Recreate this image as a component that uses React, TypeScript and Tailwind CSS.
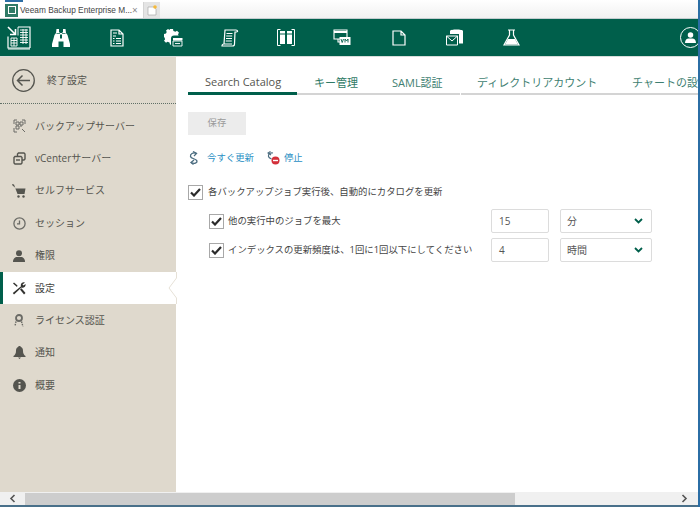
import React from "react";

const W = "#ffffff";
const GREEN = "#005f4b";

function Logo() {
  return (
    <svg width="24" height="24" viewBox="0 0 24 24" fill="none" stroke={W} strokeWidth="1.100">
      <path d="M1 1l7.500 7.500M8.500 3v5.500H3" strokeWidth="1.600" />
      <path d="M11 1h12v21M1 10.500V22h22" strokeWidth="1.200" />
      <path d="M1 23h22" strokeWidth="1" />
      <path d="M11 1v8.500M13 4h8M13 6.500h8M13 9h8M13 11.500h8M13 14h8M13 16.500h8M16 3v15M19 3v15" strokeWidth=".9" />
      <path d="M4 12h6v8H4zM4 14.500h6M4 17h6M7 12v8" strokeWidth=".9" />
    </svg>
  );
}

const icons: React.ReactNode[] = [
  <svg key="b" width="18" height="19" viewBox="0 0 18 19" fill={W}>
    <path d="M4.500 1H7v3l1 1h2l1-1V1h2.500L14 5l1.500 2 2.500 9v3h-6.500v-5.500h-5V19H0v-3l2.500-9L4 5z" />
    <path d="M4.500 5.500H8M10 5.500h3.500" stroke={GREEN} strokeWidth=".7" />
    <path d="M8 6.500h2v4H8z" fill={GREEN} />
  </svg>,
  <svg key="d" width="14" height="18" viewBox="0 0 14 18" fill="none" stroke={W} strokeWidth="1.200">
    <path d="M1 1h8l4 4v12H1zM9 1v4h4" />
    <path d="M3 4h4M3 7h3M3 9.500h1.500M6 9.500h5M3 12h1.500M6 12h5M3 14.500h1.500M6 14.500h5" />
  </svg>,
  <svg key="g" width="19" height="18" viewBox="0 0 19 18" fill={W}>
    <path d="M6 0h3l.4 2 2 .8L13 1.700l2 2-1 1.500.6 1.300H10a3 3 0 0 0-3 3v6.300l-1-.3-.5-2-2-.8L2 13.800l-2-2 1.100-1.600-.6-1.700L0 8V5l2-.4.7-1.600L2 1.500 4 0l1.600 1z" />
    <path d="M9 9h9.500v2.500H9z" />
    <path d="M9 12h9v5H9zM11 14.500h5" fill="none" stroke={W} strokeWidth=".9" />
  </svg>,
  <svg key="s" width="18" height="18" viewBox="0 0 18 18" fill="none" stroke={W} strokeWidth="1.200">
    <path d="M4 1h11c2 0 2 2 .5 2H14l-.5 12c0 1.500-1 2-2 2H1c0-1.500 1-2 2-2zM3 15h8" />
    <path d="M5.500 4.500h6M5.200 7h6M5 9.500h6M4.800 12h6" />
  </svg>,
  <svg key="l" width="18" height="17" viewBox="0 0 18 17" fill={W}>
    <path d="M.5.500v16M17.500.500v16M.5.500h3M.5 16.500h3M17.500.500h-3M17.500 16.500h-3" fill="none" stroke={W} strokeWidth="1" />
    <path d="M3 2h5v13H3zM10 2h5v13h-5z" />
    <path d="M3 5h5M10 5h5" stroke={GREEN} strokeWidth="1" />
  </svg>,
  <svg key="v" width="18" height="17" viewBox="0 0 18 17" fill="none" stroke={W} strokeWidth="1.100">
    <path d="M1 1h13v9H1z" />
    <path d="M1 3h13" strokeWidth="2" />
    <path d="M5 10v3h2" />
    <rect x="6.500" y="8" width="11" height="8" fill={W} stroke="none" />
    <path d="M8 10l1.200 3.500L10.500 10M12 13.500V10l1.500 2 1.500-2v3.500" stroke={GREEN} strokeWidth=".9" />
  </svg>,
  <svg key="p" width="14" height="16" viewBox="0 0 14 16" fill="none" stroke={W} strokeWidth="1.200">
    <path d="M1 1h8l4 4v10H1zM9 1v4h4" />
  </svg>,
  <svg key="m" width="18" height="17" viewBox="0 0 18 17" fill={W}>
    <path d="M4 2c0-2 13-2 13 0v12.500h-4V5H4z" />
    <path d="M.5 7h11v9H.5z" fill={GREEN} stroke={W} strokeWidth="1" />
    <path d="M.5 7l5.500 5 5.500-5" fill="none" stroke={W} strokeWidth="1" />
  </svg>,
  <svg key="f" width="17" height="17" viewBox="0 0 17 17" fill="none" stroke={W} strokeWidth="1.200">
    <path d="M5 1h7M6.500 1v5L1 16h15L10.500 6V1" />
    <path d="M5 10h7l3 5.500H2z" fill={W} stroke="none" />
  </svg>,
];

const G = "#6b6b66";
const navIcons: React.ReactNode[] = [
  <svg width="13" height="14" viewBox="0 0 13 14" fill="none" stroke={G} strokeWidth="1">
    <path d="M1 5V1h3M9 1h3v4M1 9v4h3M12 13l-3-3" />
    <path d="M3 3h3v3H3zM7 3h3v3H7zM3 7h3v3H3zM7 7h2" />
  </svg>,
  <svg width="13" height="13" viewBox="0 0 13 13" fill="none" stroke="#55554f" strokeWidth="1.400">
    <path d="M4.500 4V2l1-1h5.500l1 1v5l-1 1H9" />
    <path d="M1 5.500l1-1h6l1 1V11l-1 1H2l-1-1z" />
    <path d="M3 8h4" />
  </svg>,
  <svg width="14" height="14" viewBox="0 0 14 14" fill="#55554f">
    <path d="M0 0l2 .5 1.500 4h10L12.500 10h-7L3 3.500.5 1.500z" />
    <circle cx="6.500" cy="12.500" r="1.200" />
    <circle cx="11.500" cy="12.500" r="1.200" />
  </svg>,
  <svg width="13" height="13" viewBox="0 0 13 13" fill="none" stroke={G} strokeWidth="1.300">
    <circle cx="6.500" cy="6.500" r="5.600" />
    <path d="M6.500 3.500v3.300H4" />
  </svg>,
  <svg width="12" height="12" viewBox="0 0 12 12" fill="#55554f">
    <circle cx="6" cy="3.200" r="3" />
    <path d="M0 12c0-3.500 2-5 4-5h4c2 0 4 1.500 4 5z" />
  </svg>,
  <svg width="14" height="13" viewBox="0 0 14 13" fill="#333330">
    <path d="M1 1.500l1-1 3.500 3L5 5zM13 .5a3 3 0 0 0-4 3.800L.8 11l1.200 1.500L9.500 5.500A3 3 0 0 0 13.500 2L11.500 3.500 10.500 2.500z" />
    <path d="M8 7.500l1.500-1.200L13.500 11 12 12.500z" />
  </svg>,
  <svg width="12" height="14" viewBox="0 0 12 14" fill="none" stroke={G} strokeWidth="1.800">
    <circle cx="6" cy="4" r="3" />
    <path d="M3 7.500L2 12M8.500 7.500l1.500 5" strokeWidth="1.400" strokeDasharray="1.500 1" />
  </svg>,
  <svg width="13" height="13" viewBox="0 0 13 13" fill="#55554f">
    <path d="M6.500 0c1 0 1.200.5 1.300 1C9.500 1.500 10 3 10 5c0 2.500 1 4 2.500 5v1H.5v-1C2 9 3 7.500 3 5c0-2 .5-3.500 2.200-4 .1-.5.3-1 1.300-1zM5 11.500h3L6.500 13z" />
  </svg>,
  <svg width="13" height="13" viewBox="0 0 13 13">
    <circle cx="6.500" cy="6.500" r="6.500" fill="#55554f" />
    <path d="M6.500 3v1.500M6.500 6v4" stroke="#dfd9cd" strokeWidth="2" />
  </svg>,
];

const navLabels = ["バックアップサーバー", "vCenterサーバー", "セルフサービス", "セッション", "権限", "設定", "ライセンス認証", "通知", "概要"];

function Check() {
  return (
    <span className="flex h-[15px] w-[15px] shrink-0 items-center justify-center border border-[#a8a8a8] bg-white">
      <svg width="11" height="9" viewBox="0 0 11 9" fill="none" stroke="#2b2b2b" strokeWidth="2.200">
        <path d="M1 4.500L4 7.500 10 1" />
      </svg>
    </span>
  );
}

function Field({ value, unit }: { value: string; unit: string }) {
  return (
    <div className="flex gap-[11px]">
      <div className="flex h-[24px] w-[58px] items-center rounded-[2px] border border-[#dcdcdc] px-[7px] text-[10px] text-[#555]">{value}</div>
      <div className="flex h-[24px] w-[92px] items-center justify-between rounded-[2px] border border-[#dcdcdc] pl-[6px] pr-[8px] text-[10px] text-[#555]">
        {unit}
        <svg width="9" height="6" viewBox="0 0 9 6" fill="none" stroke={GREEN} strokeWidth="1.800">
          <path d="M1 1l3.500 3.500L8 1" />
        </svg>
      </div>
    </div>
  );
}

export default function App() {
  return (
    <div
      className="relative flex h-[507px] w-[700px] flex-col overflow-hidden bg-white"
      style={{ fontFamily: '"Open Sans","Noto Sans CJK JP",sans-serif' }}
    >
      {/* browser tab strip */}
      <div className="flex h-[19px] items-end border-b border-[#c4cdd0] bg-gradient-to-b from-white to-[#f1f1f1]">
        <div className="flex h-[16px] w-[144px] items-center border-r border-[#d4d4d4] bg-white pl-[5px] pr-[6px]">
          <span className="flex h-[13px] w-[13px] shrink-0 items-center justify-center bg-[#2f7a66]">
            <span className="h-[8px] w-[8px] border border-white" />
          </span>
          <span className="ml-[2px] whitespace-nowrap text-[8.300px] leading-none text-[#444]" style={{ fontFamily: '"Liberation Sans",sans-serif' }}>Veeam Backup Enterprise M...</span>
          <span className="ml-auto text-[10px] leading-none text-[#8a8a8a]">×</span>
        </div>
        <div className="flex h-[16px] w-[16px] items-center justify-center bg-[#e4e4e4]">
          <svg width="10" height="11" viewBox="0 0 10 11">
            <path d="M1 2h6l2 2v6H1z" fill="#fff" stroke="#aaa" strokeWidth=".7" />
            <circle cx="8" cy="2" r="1.800" fill="#f5b93a" />
          </svg>
        </div>
      </div>

      {/* green header */}
      <div className="relative flex h-[37px] shrink-0 items-center bg-[#005f4b]">
        <div className="flex w-[36px] justify-center pl-[1px]"><Logo /></div>
        <div className="flex flex-1 items-center">
          {icons.map((ic, i) => (
            <div key={i} className="flex w-[56.250px] justify-center first:ml-[-3px]">{ic}</div>
          ))}
        </div>
        <span className="absolute left-[680px] top-[8px] flex h-[21px] w-[21px] items-center justify-center rounded-full border border-white">
          <svg width="11" height="11" viewBox="0 0 12 12" fill={W}>
            <circle cx="6" cy="3.200" r="3" />
            <path d="M0 12c0-3.500 2-5 4-5h4c2 0 4 1.500 4 5z" />
          </svg>
        </span>
      </div>

      <div className="flex min-h-0 flex-1 border-t border-[#d7dedb]">
        {/* sidebar */}
        <aside className="flex w-[176px] shrink-0 flex-col bg-[#dfd9cd]">
          <div className="flex h-[47px] items-center gap-[12px] border-b border-dotted border-[#5f6f66] pl-[12px]">
            <svg width="23" height="23" viewBox="0 0 23 23" fill="none" stroke="#55554f" strokeWidth="1.300">
              <circle cx="11.500" cy="11.500" r="10.800" />
              <path d="M18 11.500H5.500M10.500 6.500l-5 5 5 5" strokeWidth="1.500" />
            </svg>
            <span className="text-[10px] text-[#55554f]">終了設定</span>
          </div>
          <nav className="flex flex-col pt-[6px]">
            {navLabels.map((l, i) => {
              const active = i === 5;
              return (
                <div
                  key={l}
                  className={
                    active
                      ? "relative flex h-[32.400px] items-center border-l-[3px] border-[#005f4b] bg-white pl-[9px] text-[#44443f]"
                      : "flex h-[32.400px] items-center pl-[12px] text-[#55554f]"
                  }
                >
                  <span className="flex w-[14px] justify-center">{navIcons[i]}</span>
                  <span className="ml-[9px] text-[10px]">{l}</span>
                  {active && (
                    <svg className="absolute right-[-1px] top-0" width="9" height="32" viewBox="0 0 9 32" fill="none" stroke="#e6e1d7" strokeWidth="1">
                      <path d="M8.500 0v6L1 16l7.500 10v6" />
                    </svg>
                  )}
                </div>
              );
            })}
          </nav>
        </aside>

        {/* content */}
        <main className="min-w-0 flex-1 overflow-hidden pl-[12px]">
          <div className="mt-[14px] flex h-[24px] w-[522px] whitespace-nowrap text-[11px] leading-none">
            <div className="flex h-full w-[109px] shrink-0 items-center border-b-[3px] border-[#005f4b] pl-[17px] text-[#55554f]">Search Catalog</div>
            <div className="flex h-full w-[54px] shrink-0 items-center overflow-visible border-b-2 border-[#d4d4d4] pl-[17px] text-[#2f7a66]">キー管理</div>
            <div className="flex h-full w-[109px] shrink-0 items-center border-b-2 border-[#d4d4d4] pl-[41px] text-[#3f7f72]">SAML認証</div>
            <div className="ml-[1px] flex h-full w-[171px] shrink-0 items-center border-b-2 border-[#d4d4d4] pl-[16px] text-[#3f7f72]">ディレクトリアカウント</div>
            <div className="flex h-full min-w-0 flex-1 items-center border-b-2 border-[#d4d4d4] text-[#3f7f72]">
              <span className="w-[66px] overflow-hidden">チャートの設定</span>
            </div>
          </div>

          <div className="mt-[17px] flex h-[23px] w-[58px] items-center justify-center bg-[#ececec] text-[9.400px] text-[#9a9a9a]">保存</div>

          <div className="mt-[16px] flex h-[14px] items-center text-[9.400px] text-[#2a8fc4]">
            <svg width="11" height="14" viewBox="0 0 11 14" fill="none" stroke="#4c6d80" strokeWidth="1.300">
              <path d="M8.500 2.500C5 1 2 3 2.500 5.500c.5 2.500 6 2 6.500 4.500.3 2-2.500 3.200-6 1.500" />
              <path d="M5 .5L8.500 2.500 6 5M6 9l-3 2.500L5.500 13.500" />
            </svg>
            <span className="ml-[8px]">今すぐ更新</span>
            <svg className="ml-[13px]" width="13" height="14" viewBox="0 0 13 14">
              <path d="M6 2C3 1.500 1 3 1.500 5.500 2 7 3.500 7.500 4.500 8" fill="none" stroke="#4c6d80" strokeWidth="1.200" />
              <path d="M3.500.5L1 2l3 2" fill="none" stroke="#4c6d80" strokeWidth="1.200" />
              <circle cx="8.500" cy="9.500" r="4" fill="#d3303a" />
              <path d="M6 9.500h5" stroke="#fff" strokeWidth="1.400" />
            </svg>
            <span className="ml-[4px]">停止</span>
          </div>

          <div className="mt-[19px] flex h-[16px] items-center">
            <Check />
            <span className="ml-[5px] text-[9.400px] text-[#444]">各バックアップジョブ実行後、自動的にカタログを更新</span>
          </div>

          <div className="mt-[9px] flex h-[24px] items-center pl-[21px]">
            <Check />
            <span className="ml-[4px] w-[263px] shrink-0 text-[9.400px] text-[#444]">他の実行中のジョブを最大</span>
            <Field value="15" unit="分" />
          </div>
          <div className="mt-[5px] flex h-[24px] items-center pl-[21px]">
            <Check />
            <span className="ml-[4px] w-[263px] shrink-0 whitespace-nowrap text-[9.400px] text-[#444]">インデックスの更新頻度は、1回に1回以下にしてください</span>
            <Field value="4" unit="時間" />
          </div>
        </main>
      </div>

      {/* bottom scrollbar */}
      <div className="flex h-[13px] shrink-0 items-center justify-between bg-[#f0f0f0] pl-[9px] pr-[12px]">
        <svg width="7" height="9" viewBox="0 0 7 9" fill="none" stroke="#555" strokeWidth="1.600"><path d="M5.500 1L2 4.500 5.500 8" /></svg>
        <span className="absolute bottom-[2px] left-[25px] h-[12px] w-[490px] bg-[#cdcdcd]" />
        <svg width="7" height="9" viewBox="0 0 7 9" fill="none" stroke="#555" strokeWidth="1.600"><path d="M1.500 1L5 4.500 1.500 8" /></svg>
      </div>
      <div className="h-[2px] shrink-0 bg-[#49708a]" />
      <div className="absolute right-0 top-0 h-full w-[2px] bg-[#2b6ea5]" />
      <div className="absolute left-[5px] top-0 h-[2px] w-[18px] bg-[#2b6ea5]" />
    </div>
  );
}
